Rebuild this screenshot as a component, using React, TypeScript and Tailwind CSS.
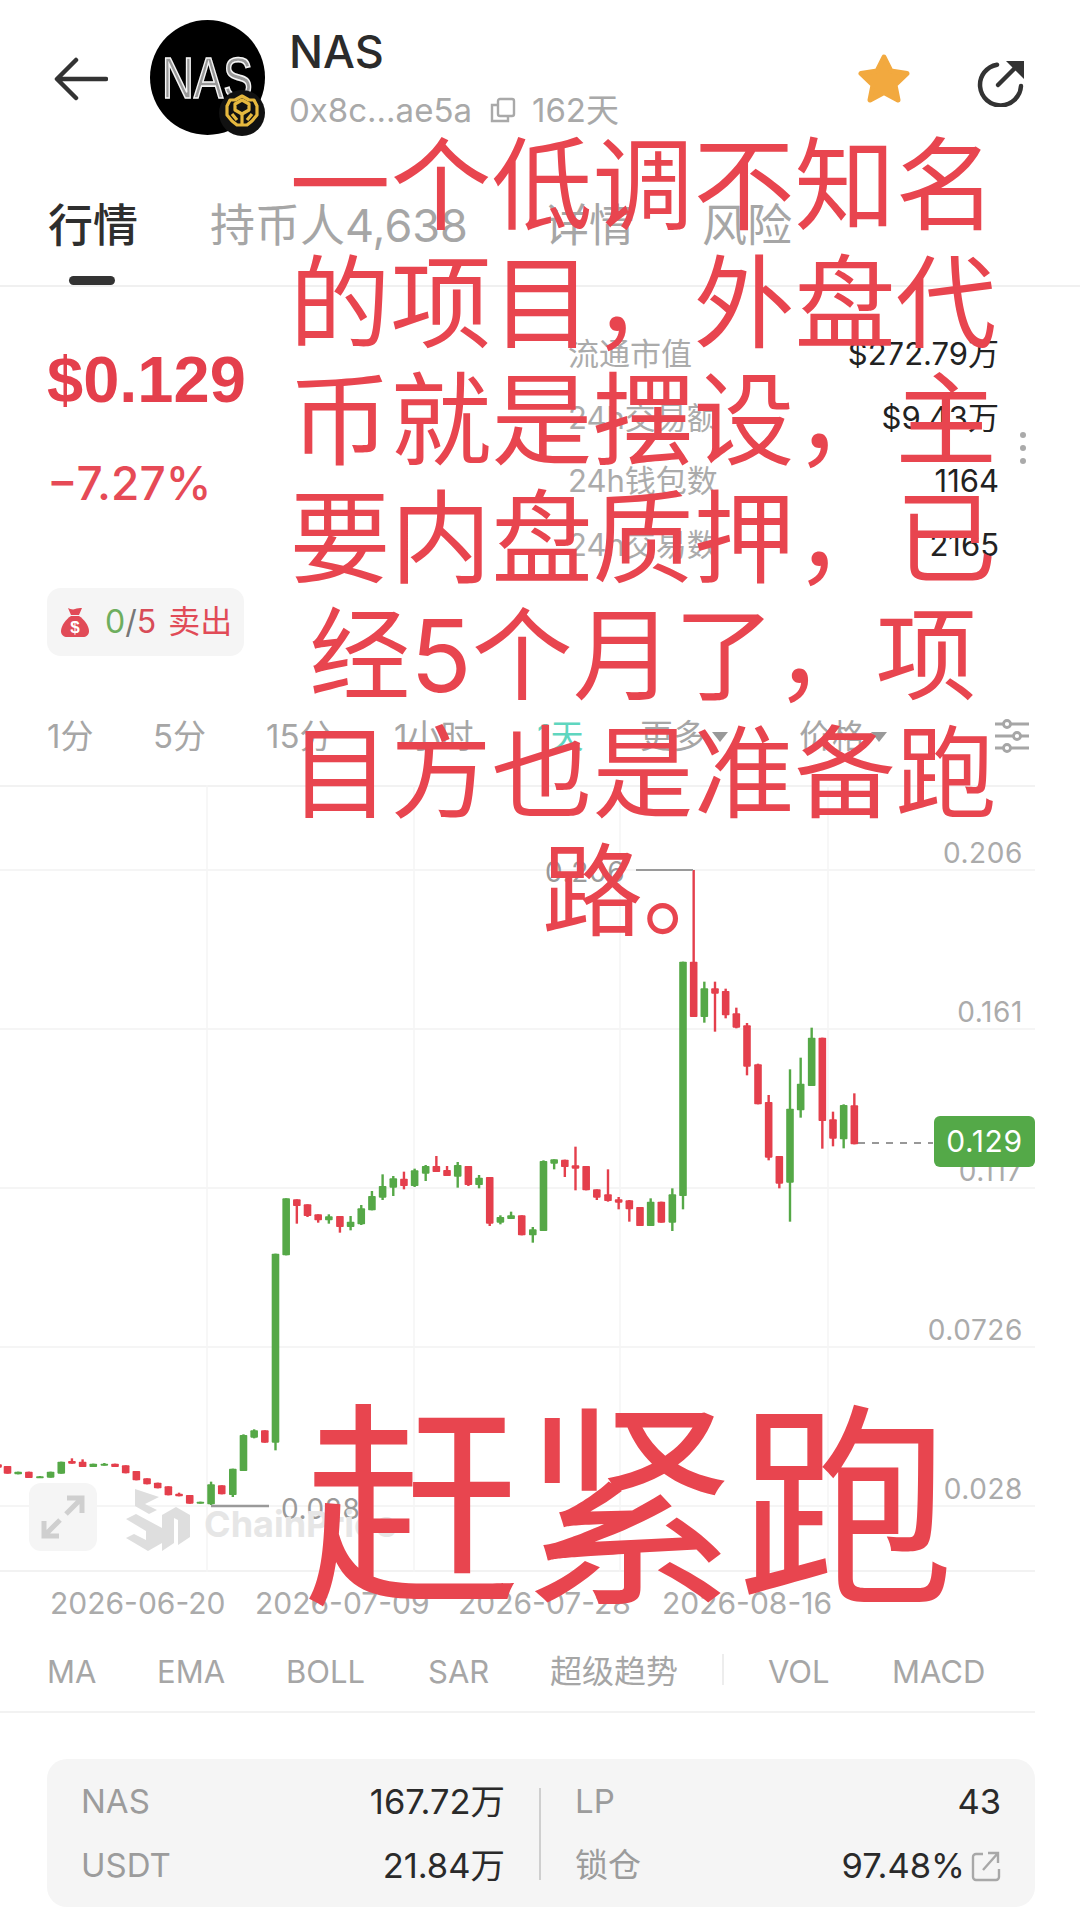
import React from "react";

type C = [number, number, number, number, number, "r" | "g"];
// x, wickTop, bodyTop, bodyBottom, wickBottom, colour (in page pixels, derived by measuring)
const right: C[] = [
  [763, 757, 793, 910, 910, "r"], [731, 790, 792, 895, 922, "g"], [699, 812, 835, 893, 916, "r"], [667, 590, 590, 840, 923, "r"],
  [635, 560, 590, 735, 735, "g"], [602, 650, 728, 808, 830, "g"], [570, 685, 803, 1025, 1142, "g"], [538, 945, 945, 1028, 1042, "r"],
  [506, 762, 783, 950, 958, "r"], [474, 668, 670, 790, 790, "r"], [441, 546, 553, 677, 703, "r"], [409, 500, 517, 560, 562, "r"],
  [377, 443, 450, 523, 532, "r"], [345, 422, 442, 458, 572, "r"], [313, 422, 442, 528, 545, "g"], [281, 87, 362, 528, 528, "r"],
  [249, 362, 362, 1065, 1105, "g"], [217, 1042, 1060, 1145, 1170, "g"], [184, 1082, 1082, 1145, 1145, "r"], [152, 1072, 1082, 1155, 1155, "g"],
  [120, 1098, 1098, 1155, 1155, "r"], [88, 1077, 1078, 1105, 1142, "r"], [56, 1068, 1075, 1085, 1105, "r"], [24, 985, 1060, 1080, 1082, "r"],
];
const left: C[] = [
  [1510, 265, 265, 290, 297, "r"], [1483, 195, 195, 268, 268, "r"], [1456, 137, 193, 203, 268, "r"], [1429, 176, 176, 198, 228, "r"],
  [1402, 175, 175, 188, 205, "g"], [1375, 178, 180, 390, 390, "g"], [1348, 378, 385, 403, 425, "g"], [1320, 343, 343, 403, 403, "r"],
  [1293, 332, 343, 354, 354, "g"], [1266, 343, 348, 365, 370, "g"], [1239, 228, 228, 368, 375, "r"], [1212, 222, 230, 252, 262, "g"],
  [1185, 195, 195, 252, 255, "r"], [1158, 183, 192, 227, 260, "g"], [1131, 195, 207, 225, 225, "r"], [1104, 165, 195, 213, 213, "r"],
  [1077, 192, 195, 218, 240, "g"], [1049, 203, 208, 255, 258, "g"], [1022, 212, 233, 255, 265, "r"], [995, 225, 232, 260, 285, "g"],
  [968, 220, 255, 290, 297, "g"], [941, 270, 285, 328, 328, "g"], [914, 312, 322, 370, 372, "g"], [887, 345, 362, 378, 388, "g"],
  [860, 345, 345, 378, 395, "r"], [832, 340, 346, 358, 368, "g"], [805, 340, 340, 358, 365, "r"], [778, 310, 310, 345, 348, "r"],
  [751, 295, 295, 315, 368, "r"], [724, 292, 292, 463, 463, "g"], [697, 458, 458, 1025, 1048, "g"], [670, 988, 988, 1025, 1025, "r"],
  [643, 985, 988, 1010, 1012, "g"], [616, 1000, 1002, 1110, 1110, "g"], [589, 1103, 1103, 1182, 1188, "g"], [561, 1153, 1153, 1180, 1180, "r"],
  [534, 1142, 1150, 1210, 1212, "g"], [507, 1202, 1202, 1208, 1208, "g"], [480, 1182, 1182, 1208, 1208, "r"], [453, 1175, 1178, 1186, 1186, "r"],
  [426, 1156, 1156, 1183, 1183, "r"], [399, 1145, 1145, 1162, 1162, "r"], [372, 1132, 1132, 1150, 1150, "r"], [345, 1110, 1110, 1138, 1138, "r"],
  [318, 1093, 1093, 1117, 1117, "r"], [291, 1088, 1088, 1098, 1098, "r"], [264, 1086, 1088, 1094, 1094, "g"], [236, 1088, 1088, 1098, 1098, "g"],
  [209, 1075, 1082, 1098, 1098, "r"], [182, 1072, 1080, 1088, 1088, "r"], [155, 1082, 1082, 1118, 1118, "g"], [128, 1112, 1112, 1130, 1130, "g"],
  [101, 1125, 1126, 1131, 1131, "g"], [73, 1112, 1112, 1131, 1131, "r"], [46, 1112, 1112, 1120, 1120, "g"], [19, 1095, 1095, 1118, 1118, "r"],
  [-5, 1090, 1090, 1100, 1100, "r"],
];
const RED = "#e43f4c";
const GREEN = "#55a847";
const candles = [
  ...right.map(([x, a, b, c, d, k]) => [600 + x / 3, 840 + a / 3, 840 + b / 3, 840 + c / 3, 840 + d / 3, k] as const),
  ...left.map(([x, a, b, c, d, k]) => [x / 2.53, 1100 + a / 3, 1100 + b / 3, 1100 + c / 3, 1100 + d / 3, k] as const),
];

function Chart() {
  return (
    <svg className="absolute inset-0" width="1080" height="787" viewBox="0 784 1080 787">
      {[869, 1028, 1187, 1346, 1505].map((y) => (
        <line key={y} x1="0" x2="1035" y1={y} y2={y} stroke="#f2f2f2" strokeWidth="1.5" />
      ))}
      {[207, 414, 620, 828].map((x) => (
        <line key={x} x1={x} x2={x} y1="784" y2="1571" stroke="#f4f4f4" strokeWidth="1.5" />
      ))}
      {candles.map(([x, a, b, c, d, k], i) => {
        const col = k === "r" ? RED : GREEN;
        return (
          <g key={i} fill={col}>
            <rect x={x - 1.2} y={a} width="2.4" height={Math.max(d - a, 0)} />
            <rect x={x - 3.8} y={b} width="7.6" height={Math.max(c - b, 2)} rx="0.8" />
          </g>
        );
      })}
      <path d="M636 869H693" stroke="#9a9a9a" strokeWidth="2" />
      <path d="M211 1505H269" stroke="#9a9a9a" strokeWidth="2.5" />
      <path d="M858 1142H933" stroke="#777" strokeWidth="1.5" strokeDasharray="7 7" />
    </svg>
  );
}

function Avatar() {
  return (
    <svg width="116" height="116" viewBox="0 0 116 116" className="shrink-0 overflow-visible">
      <circle cx="57.5" cy="57.5" r="57.5" fill="#000" />
      <text x="12" y="78" fontSize="58" fontFamily="Liberation Sans, sans-serif" fill="#999" stroke="#f5f5f5" strokeWidth="1.7" transform="translate(12 78) scale(0.76 1) translate(-12 -78)">NAS</text>
      <circle cx="92" cy="93" r="23" fill="#111" />
      <g fill="none" stroke="#e6b83e" strokeWidth="3.2" strokeLinejoin="round">
        <path d="M92 76l7 4 5 0 3 6v9l-5 6-5 4h-10l-5-4-5-6v-9l3-6 5 0z" />
        <path d="M85 84l7-4 7 4v6l-7 4-7-4z" />
        <path d="M92 94v10M82 94l5 6M102 94l-5 6" />
      </g>
    </svg>
  );
}

function Stat({ label, value }: { label: string; value: string }) {
  return (
    <div className="flex h-[63.4px] items-center justify-between">
      <span className="text-[#ababab]">{label}</span>
      <span className="text-[#222]">{value}</span>
    </div>
  );
}

function CardRow({ label, value, icon }: { label: string; value: string; icon?: boolean }) {
  return (
    <div className="flex h-[64px] items-center justify-between">
      <span className="text-[#9c9c9c]">{label}</span>
      <span className="flex items-center text-[34.500px] text-[#2a2a2a]">
        {value}
        {icon && (
          <svg width="30" height="32" viewBox="0 0 30 32" className="ml-[6px]" fill="none" stroke="#a8a8a8" strokeWidth="2.4">
            <path d="M12 4H5a3 3 0 0 0-3 3v20a3 3 0 0 0 3 3h20a3 3 0 0 0 3-3v-8" />
            <path d="M12 20L27 3M17 3h10v10" />
          </svg>
        )}
      </span>
    </div>
  );
}

const lines = ["一个低调不知名", "的项目，外盘代", "币就是摆设，主", "要内盘质押，已", "经5个月了，项", "目方也是准备跑", "路。"];

export default function App() {
  return (
    <div className="relative h-[1932px] w-[1080px] overflow-hidden bg-white [font-family:Inter,'Noto_Sans_CJK_SC',sans-serif]">
      {/* header */}
      <header className="flex h-[190px] items-start pt-[20px] pl-[54px]">
        <svg width="54" height="44" viewBox="0 0 54 44" className="mt-[37px] mr-[42px]" fill="none" stroke="#333" strokeWidth="4.5" strokeLinecap="round" strokeLinejoin="round">
          <path d="M52 22H4M22 3L3 22l19 19" />
        </svg>
        <Avatar />
        <div className="mt-[7px] ml-[23px] w-[569px]">
          <div className="text-[45px] leading-[50px] font-medium text-[#2b2b2b]">NAS</div>
          <div className="mt-[13px] flex items-center text-[33px] leading-[40px] text-[#a9a9a9]">
            <span>0x8c...ae5a</span>
            <svg width="26" height="26" viewBox="0 0 26 26" className="mr-[16px] ml-[18px]" fill="none" stroke="#a9a9a9" strokeWidth="2.4">
              <rect x="8" y="2" width="16" height="17" rx="2" />
              <path d="M8 8H2v16h16v-5" />
            </svg>
            <span>162天</span>
          </div>
        </div>
        <svg width="54" height="50" viewBox="0 0 54 50" className="mt-[33px] ml-[-1px]" fill="#f2a93f" stroke="#f2a93f" strokeWidth="5" strokeLinejoin="round">
          <path d="M27 4l7 14 16 2.500-12 11.500 3 15-14-7.500-14 7.500 3-15L4 20.500 20 18z" />
        </svg>
        <svg width="47" height="47" viewBox="0 0 47 47" className="mt-[40px] ml-[66px]" fill="none">
          <path d="M44 26A20.500 20.500 0 1 1 20 4.700" stroke="#333" strokeWidth="4.500" strokeLinecap="round" />
          <path d="M21 25L37 9" stroke="#333" strokeWidth="4.500" strokeLinecap="round" />
          <path d="M29 1h18v18z" fill="#333" />
        </svg>
      </header>

      {/* tabs */}
      <nav className="flex h-[97px] items-start border-b-2 border-[#f0f0f0] pt-[6px] pl-[48px] text-[45px] leading-[60px] text-[#a6a6a6]">
        <div className="relative w-[162px]">
          <span className="font-medium text-[#2e2e2e]">行情</span>
          <span className="absolute top-[80px] left-[21px] h-[9px] w-[46px] rounded-full bg-[#333]" />
        </div>
        <span className="w-[334px]">持币人4,638</span>
        <span className="w-[158px]">详情</span>
        <span>风险</span>
      </nav>

      {/* market */}
      <section className="relative flex h-[498px] flex-col">
        <div className="flex h-[385px]">
          <div className="w-[568px] pl-[47px]">
            <div className="mt-[55px] [font-family:'Liberation_Sans',sans-serif] text-[65px] leading-[76px] font-bold text-[#e43f4c]">$0.129</div>
            <div className="mt-[40px] text-[46px] leading-[50px] font-medium text-[#e64a56]">−7.27%</div>
            <div className="mt-[80px] flex h-[68px] w-[197px] items-center rounded-[14px] bg-[#f5f5f5] pl-[13px] text-[32px]">
              <svg width="30" height="30" viewBox="0 0 30 30" className="mr-[15px]" fill="#e14b57">
                <path d="M8 1c2 1 5 2 7 1s5-1 7-1l-3 7h-8z" />
                <path d="M11 9h8c5 3 10 10 10 15 0 4-3 6-6 6H7c-3 0-6-2-6-6C1 19 6 12 11 9z" />
                <text x="15" y="26" textAnchor="middle" fontSize="17" fontWeight="700" fill="#fff" fontFamily="Liberation Sans, sans-serif">$</text>
              </svg>
              <span className="text-[#6eae5e]">0</span>
              <span className="text-[#777]">/</span>
              <span className="text-[#d84c58]">5</span>
              <span className="ml-[12px] text-[#e14b57]">卖出</span>
            </div>
          </div>
          <div className="w-[431px] pt-[36px] text-[31px]">
            <Stat label="流通市值" value="$272.79万" />
            <Stat label="24h交易额" value="$9.43万" />
            <Stat label="24h钱包数" value="1164" />
            <Stat label="24h交易数" value="2165" />
          </div>
        </div>
        <div className="absolute top-[145px] left-[1020px] flex flex-col gap-[7px]">
          <span className="h-[6px] w-[6px] rounded-full bg-[#aaa]" />
          <span className="h-[6px] w-[6px] rounded-full bg-[#aaa]" />
          <span className="h-[6px] w-[6px] rounded-full bg-[#aaa]" />
        </div>
        <div className="flex h-[113px] items-start pt-[42px] pl-[47px] text-[33px] leading-[44px] text-[#a6a6a6]">
          <span className="w-[106px]">1分</span>
          <span className="w-[113px]">5分</span>
          <span className="w-[128px]">15分</span>
          <span className="w-[143px]">1小时</span>
          <span className="w-[103px] text-[#5fd6bf]">1天</span>
          <span className="flex w-[159px] items-center">
            更多
            <span className="mt-[2px] ml-[6px] h-0 w-0 border-x-[8px] border-t-[10px] border-x-transparent border-t-[#999]" />
          </span>
          <span className="flex w-[196px] items-center">
            价格
            <span className="mt-[2px] ml-[6px] h-0 w-0 border-x-[8px] border-t-[10px] border-x-transparent border-t-[#999]" />
          </span>
          <svg width="34" height="34" viewBox="0 0 34 34" className="mt-[5px]" fill="#fff" stroke="#a6a6a6" strokeWidth="2.8">
            <path d="M0 5h34M0 17h34M0 29h34" />
            <circle cx="12" cy="5" r="3.500" />
            <circle cx="22" cy="17" r="3.500" />
            <circle cx="12" cy="29" r="3.500" />
          </svg>
        </div>
      </section>

      {/* chart */}
      <section className="relative h-[787px] w-[1035px] border-y-2 border-[#f2f2f2]">
        <div className="absolute inset-[-2px_0]">
          <Chart />
        </div>
        <div className="absolute top-[48px] right-[12px] text-[28px] leading-[36px] tracking-[0.6px] text-[#ababab]">0.206</div>
        <div className="absolute top-[207px] right-[12px] text-[28px] leading-[36px] tracking-[0.6px] text-[#ababab]">0.161</div>
        <div className="absolute top-[366px] right-[12px] text-[28px] leading-[36px] tracking-[0.6px] text-[#ababab]">0.117</div>
        <div className="absolute top-[525px] right-[12px] text-[28px] leading-[36px] tracking-[0.6px] text-[#ababab]">0.0726</div>
        <div className="absolute top-[684px] right-[12px] text-[28px] leading-[36px] tracking-[0.6px] text-[#ababab]">0.028</div>
        <div className="absolute top-[67px] left-[545px] text-[28px] leading-[36px] tracking-[0.6px] text-[#9a9a9a]">0.206</div>
        <div className="absolute top-[704px] left-[281px] text-[28px] leading-[36px] tracking-[0.6px] text-[#9a9a9a]">0.028</div>
        <div className="absolute top-[329px] left-[934px] flex h-[51px] w-[101px] items-center justify-center rounded-[6px] bg-[#54a948] text-[30px] tracking-[0.6px] text-white">0.129</div>

        {/* expand + watermark */}
        <div className="absolute top-[696px] left-[29px] flex h-[68px] w-[68px] items-center justify-center rounded-[12px] bg-[#f5f5f5]">
          <svg width="44" height="44" viewBox="0 0 44 44" fill="none" stroke="#cfcfcf" strokeWidth="5">
            <path d="M26 3h15v15M41 3L25 19M18 41H3V26M3 41l16-16" />
          </svg>
        </div>
        <svg width="64" height="64" viewBox="0 0 64 64" className="absolute top-[700px] left-[126px]" fill="#dedede">
          <path d="M9 2l24 8-14 7 12 6-8 4L9 19z" />
          <path d="M0 32l10-5 26 14v15l-14 8L0 51l8-4 12 6V44z" />
          <path d="M36 28l14-8 14 8v22l-12 8V33l-4-2v25l-12 8z" />
        </svg>
        <div className="absolute top-[715px] left-[204px] text-[36px] leading-[44px] font-bold text-[#e6e6e6]">ChainPrice</div>
      </section>

      {/* dates */}
      <div className="flex h-[62px] items-center pl-[50px] text-[30px] text-[#ababab]">
        <span className="w-[205px]">2026-06-20</span>
        <span className="w-[203px]">2026-07-09</span>
        <span className="w-[204px]">2026-07-28</span>
        <span>2026-08-16</span>
      </div>

      {/* indicators */}
      <div className="flex h-[79px] w-[1035px] items-start border-b-2 border-[#f2f2f2] pl-[47px] text-[31px] leading-[44px] text-[#a6a6a6]">
        <span className="mt-[16px] w-[110px]">MA</span>
        <span className="mt-[16px] w-[129px]">EMA</span>
        <span className="mt-[16px] w-[142px]">BOLL</span>
        <span className="mt-[16px] w-[122px]">SAR</span>
        <span className="mt-[16px] w-[172px] text-[32px]">超级趋势</span>
        <span className="mt-[20px] mr-[44px] h-[31px] w-[2px] bg-[#ededed]" />
        <span className="mt-[16px] w-[124px]">VOL</span>
        <span className="mt-[16px]">MACD</span>
      </div>

      {/* card */}
      <div className="mt-[46px] ml-[47px] flex h-[148px] w-[988px] items-center rounded-[20px] bg-[#f5f5f5] pt-[2px] pr-[34px] pl-[34px] text-[33px]">
        <div className="w-[424px]">
          <CardRow label="NAS" value="167.72万" />
          <CardRow label="USDT" value="21.84万" />
        </div>
        <div className="mr-[34px] ml-[34px] h-[92px] w-[2px] bg-[#cfcfcf]" />
        <div className="w-[426px]">
          <CardRow label="LP" value="43" />
          <CardRow label="锁仓" value="97.48%" icon />
        </div>
      </div>

      {/* overlay text */}
      <div className="pointer-events-none absolute top-[127px] left-[243px] w-[800px] text-center text-[101px] leading-[117.6px] text-[#e8454f]">
        {lines.map((l) => (
          <div key={l}>{l}</div>
        ))}
      </div>
      <div className="pointer-events-none absolute top-[1368px] left-[204px] w-[850px] text-center text-[217px] leading-[280px] text-[#e8454f]">赶紧跑</div>
    </div>
  );
}
